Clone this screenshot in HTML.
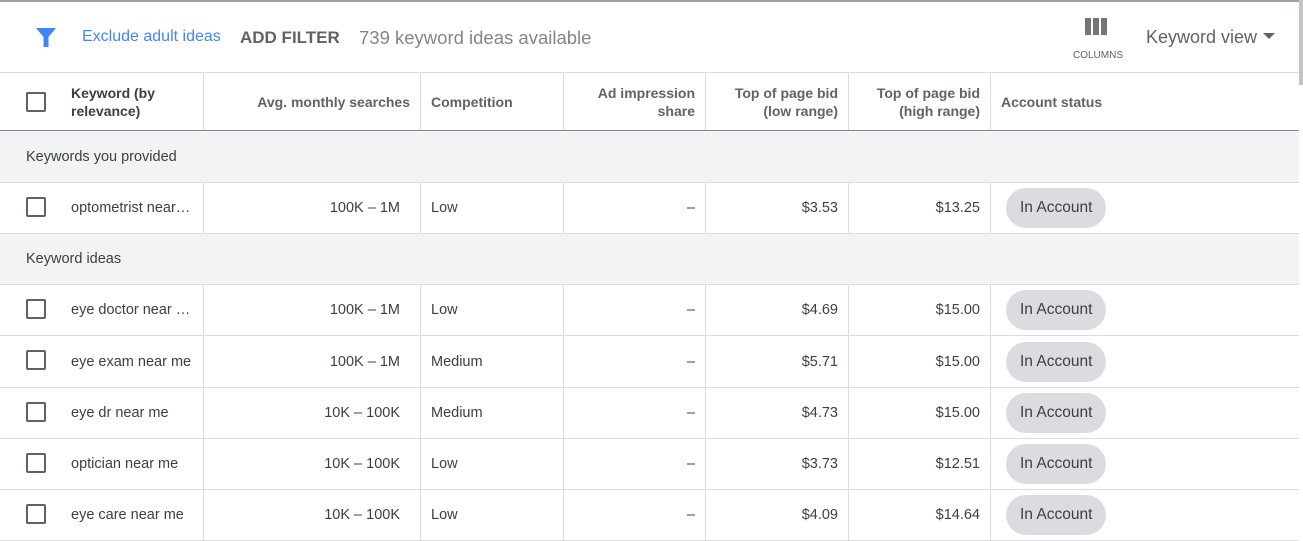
<!DOCTYPE html><html><head><style>
*{margin:0;padding:0;box-sizing:border-box}
body{width:1303px;height:540px;overflow:hidden;background:#fff;font-family:"Liberation Sans",Arial,sans-serif;position:relative;color:#3c4043}
.a{position:absolute}
.top{left:0;top:0;width:1303px;height:2px;background:#9aa0a6}
.sb{left:1299px;top:0;width:4px;height:85px;background:#c4c4c4}
.row{position:absolute;left:0;width:1299px;border-bottom:1px solid #dadce0}
.sec{background:#f1f3f4}
.c{position:absolute;top:0;height:100%;border-right:1px solid #dadce0;display:flex;align-items:center;font-size:14.5px;color:#3c4043;padding:0 10px}
.r{justify-content:flex-end}
.cb{position:absolute;left:26px;width:20px;height:20px;border:2px solid #5f6368;border-radius:2px}
.pill{background:#dadce0;border-radius:20px;padding:11px 14px;font-size:15.5px;color:#3c4043}
.h{font-weight:bold;color:#3c4043;line-height:18px}
.hn{color:#5f6368;font-weight:bold;line-height:18px;text-align:right}
</style></head><body>
<div class="a top"></div>
<svg class="a" style="left:35px;top:26px" width="22" height="22" viewBox="0 0 22 22"><path d="M1 2h20l-7.5 9v10h-5V11z" fill="#4285f4"/></svg>
<div class="a" style="left:82px;top:28px;font-size:16px;color:#4285f4">Exclude adult ideas</div>
<div class="a" style="left:240px;top:28px;font-size:17px;font-weight:bold;color:#5f6368">ADD FILTER</div>
<div class="a" style="left:359px;top:27px;font-size:18.5px;color:#80868b">739 keyword ideas available</div>
<svg class="a" style="left:1085px;top:18px" width="24" height="18"><rect x="0" y="0" width="6" height="17" fill="#757575"/><rect x="8" y="0" width="6" height="17" fill="#757575"/><rect x="16" y="0" width="6" height="17" fill="#757575"/></svg>
<div class="a" style="left:1073px;top:50px;font-size:10px;color:#5f6368">COLUMNS</div>
<div class="a" style="left:1146px;top:27px;font-size:18px;color:#5f6368">Keyword view</div>
<svg class="a" style="left:1263px;top:33px" width="12" height="7"><path d="M0 0h12L6 6z" fill="#5f6368"/></svg>
<div class="a sb"></div>
<div class="row" style="top:72px;height:59px;border-top:1px solid #dadce0;border-bottom:1px solid #80868b">
<div class="cb" style="top:19px"></div>
<div class="c h" style="left:61px;width:143px;font-size:14px">Keyword (by<br>relevance)</div>
<div class="c r hn" style="left:204px;width:217px;font-size:14px">Avg. monthly searches</div>
<div class="c hn" style="left:421px;width:143px;font-size:14px;text-align:left">Competition</div>
<div class="c r hn" style="left:564px;width:142px;font-size:14px">Ad impression<br>share</div>
<div class="c r hn" style="left:706px;width:143px;font-size:14px">Top of page bid<br>(low range)</div>
<div class="c r hn" style="left:849px;width:142px;font-size:14px">Top of page bid<br>(high range)</div>
<div class="c hn" style="left:991px;width:300px;border:none;font-size:14px">Account status</div>
</div>
<div class="row sec" style="top:131px;height:52px"><div class="c" style="left:16px;border:none">Keywords you provided</div></div>
<div class="row sec" style="top:234px;height:51px"><div class="c" style="left:16px;border:none">Keyword ideas</div></div>
<div id="rows"></div>
<script>
var d=[[183,51,"optometrist near…","100K – 1M","Low","$3.53","$13.25"],[285,51,"eye doctor near …","100K – 1M","Low","$4.69","$15.00"],[336,52,"eye exam near me","100K – 1M","Medium","$5.71","$15.00"],[388,51,"eye dr near me","10K – 100K","Medium","$4.73","$15.00"],[439,51,"optician near me","10K – 100K","Low","$3.73","$12.51"],[490,51,"eye care near me","10K – 100K","Low","$4.09","$14.64"]];
var h="";d.forEach(function(r){h+='<div class="row" style="top:'+r[0]+'px;height:'+r[1]+'px"><div class="cb" style="top:14px"></div><div class="c" style="left:61px;width:143px">'+r[2]+'</div><div class="c r" style="left:204px;width:217px;padding-right:20px">'+r[3]+'</div><div class="c" style="left:421px;width:143px">'+r[4]+'</div><div class="c r" style="left:564px;width:142px">–</div><div class="c r" style="left:706px;width:143px">'+r[5]+'</div><div class="c r" style="left:849px;width:142px">'+r[6]+'</div><div class="c" style="left:991px;width:300px;border:none;padding-left:15px"><span class="pill">In Account</span></div></div>'});
document.getElementById("rows").innerHTML=h;
</script>
</body></html>
